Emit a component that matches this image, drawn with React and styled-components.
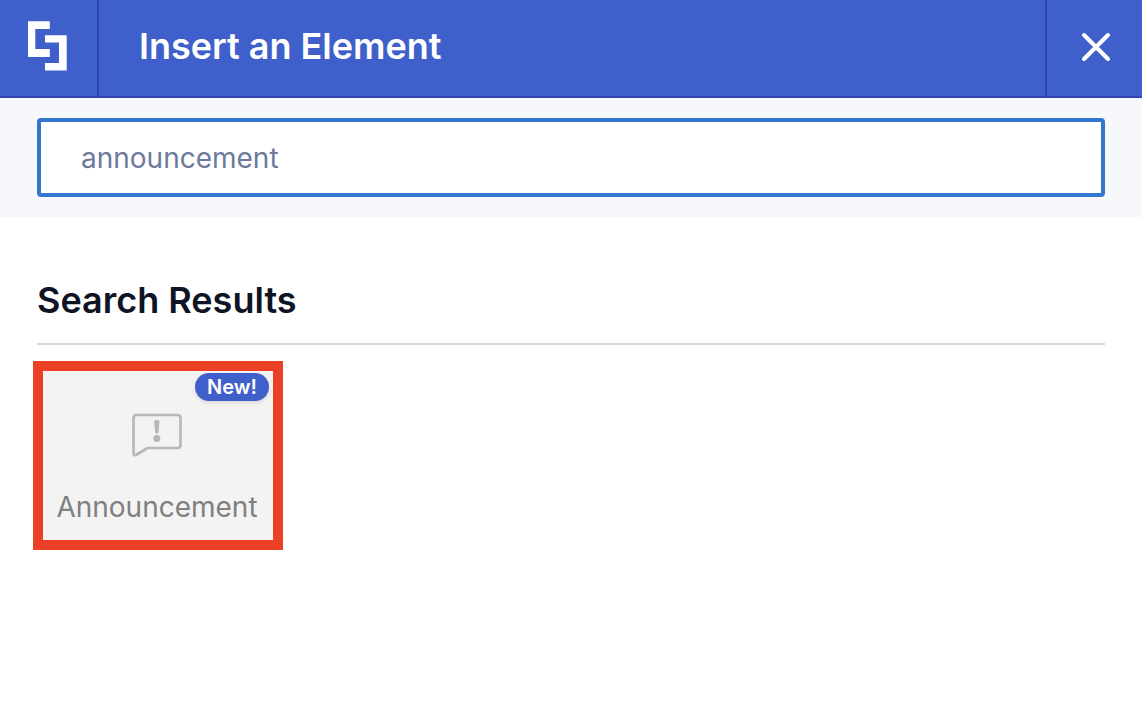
import React, { useState } from "react";
import styled, { createGlobalStyle } from "styled-components";

export default function App() {
  const [query, setQuery] = useState("announcement");
  return (
    <>
      <GlobalStyle />
      <Header>
        <LogoCell href="#" aria-label="Home">
          <svg width="40" height="50" viewBox="0 0 40 50" fill="#ffffff">
            <path d="M0 0.3H21.8V8H7.3V28H21.8V36H0Z" />
            <path d="M17 14.2H38.7V49.6H17V42H31V21.4H17Z" />
          </svg>
        </LogoCell>
        <Title>Insert an Element</Title>
        <CloseButton type="button" aria-label="Close">
          <svg width="30" height="30" viewBox="0 0 30 30">
            <path
              d="M3 3L27 27M27 3L3 27"
              stroke="#ffffff"
              strokeWidth="4"
              strokeLinecap="round"
            />
          </svg>
        </CloseButton>
      </Header>
      <SearchBar>
        <SearchInput
          type="text"
          aria-label="Search elements"
          value={query}
          onChange={(e) => setQuery(e.target.value)}
        />
      </SearchBar>
      <Results>
        <Heading>Search Results</Heading>
        <ElementCard type="button">
          <Badge>New!</Badge>
          <svg width="50" height="44" viewBox="0 0 50 44" fill="none">
            <path
              d="M4.5 2H45.5Q48.5 2 48.5 5V32Q48.5 35 45.5 35H15.5L4 42Q1.5 43 1.5 40.2V5Q1.5 2 4.5 2Z"
              stroke="#b8b8b8"
              strokeWidth="2.7"
              strokeLinejoin="round"
            />
            <path
              d="M22.2 8.5Q22.2 7 23.7 7H26Q27.5 7 27.4 8.5L26.6 19Q26.4 20.5 24.8 20.5Q23.2 20.5 23 19Z"
              fill="#b8b8b8"
            />
            <circle cx="24.8" cy="25.4" r="3.5" fill="#b8b8b8" />
          </svg>
          <Label>Announcement</Label>
        </ElementCard>
      </Results>
    </>
  );
}

const GlobalStyle = createGlobalStyle`
  * {
    box-sizing: border-box;
  }
  body {
    margin: 0;
    background-color: #ffffff;
    font-family: "Inter", sans-serif;
  }
`;
const Header = styled.header`
  display: flex;
  height: 98px;
  background-color: #3f60ca;
  border-bottom: 2px solid #3145b3;
`;
const LogoCell = styled.a`
  display: flex;
  align-items: flex-start;
  width: 99px;
  padding: 21px 0 0 28px;
  border-right: 2px solid #3145b3;
`;
const Title = styled.h1`
  flex: 1;
  margin: 0;
  padding: 0 40px;
  color: #ffffff;
  font-size: 36px;
  font-weight: 600;
  line-height: 92px;
`;
const CloseButton = styled.button`
  display: flex;
  align-items: center;
  justify-content: center;
  width: 97px;
  padding: 0 0 2px 2px;
  background: none;
  border: none;
  border-left: 2px solid #3145b3;
  cursor: pointer;
`;
const SearchBar = styled.div`
  display: flex;
  padding: 20px 37px;
  background-color: #f7f8fc;
`;
const SearchInput = styled.input`
  width: 100%;
  height: 79px;
  padding: 0 40px;
  color: #6d7a9c;
  background-color: #ffffff;
  border: 4px solid #3277ce;
  border-radius: 4px;
  font-family: inherit;
  font-size: 28px;
  outline: none;
`;
const Results = styled.main`
  padding: 60px 37px;
`;
const Heading = styled.h2`
  margin: 0 0 16px;
  padding-bottom: 20px;
  color: #0e1424;
  border-bottom: 2px solid #d6d6d6;
  font-size: 36px;
  font-weight: 600;
  line-height: 46px;
`;
const ElementCard = styled.button`
  position: relative;
  display: flex;
  align-items: center;
  flex-direction: column;
  gap: 32px;
  width: 250px;
  height: 189px;
  margin-left: -4px;
  padding: 42px 2px 0 0;
  background-color: #f3f3f3;
  border: 10px solid #eb4025;
  font-family: inherit;
  cursor: pointer;
`;
const Badge = styled.span`
  position: absolute;
  top: 2px;
  right: 4px;
  padding: 0 12px;
  color: #ffffff;
  background-color: #3f60ca;
  border-radius: 14px;
  box-shadow: 0 2px 4px rgba(0, 0, 0, 0.1);
  font-size: 20px;
  font-weight: 600;
  line-height: 28px;
`;
const Label = styled.span`
  color: #808080;
  font-size: 28px;
  line-height: 36px;
`;
